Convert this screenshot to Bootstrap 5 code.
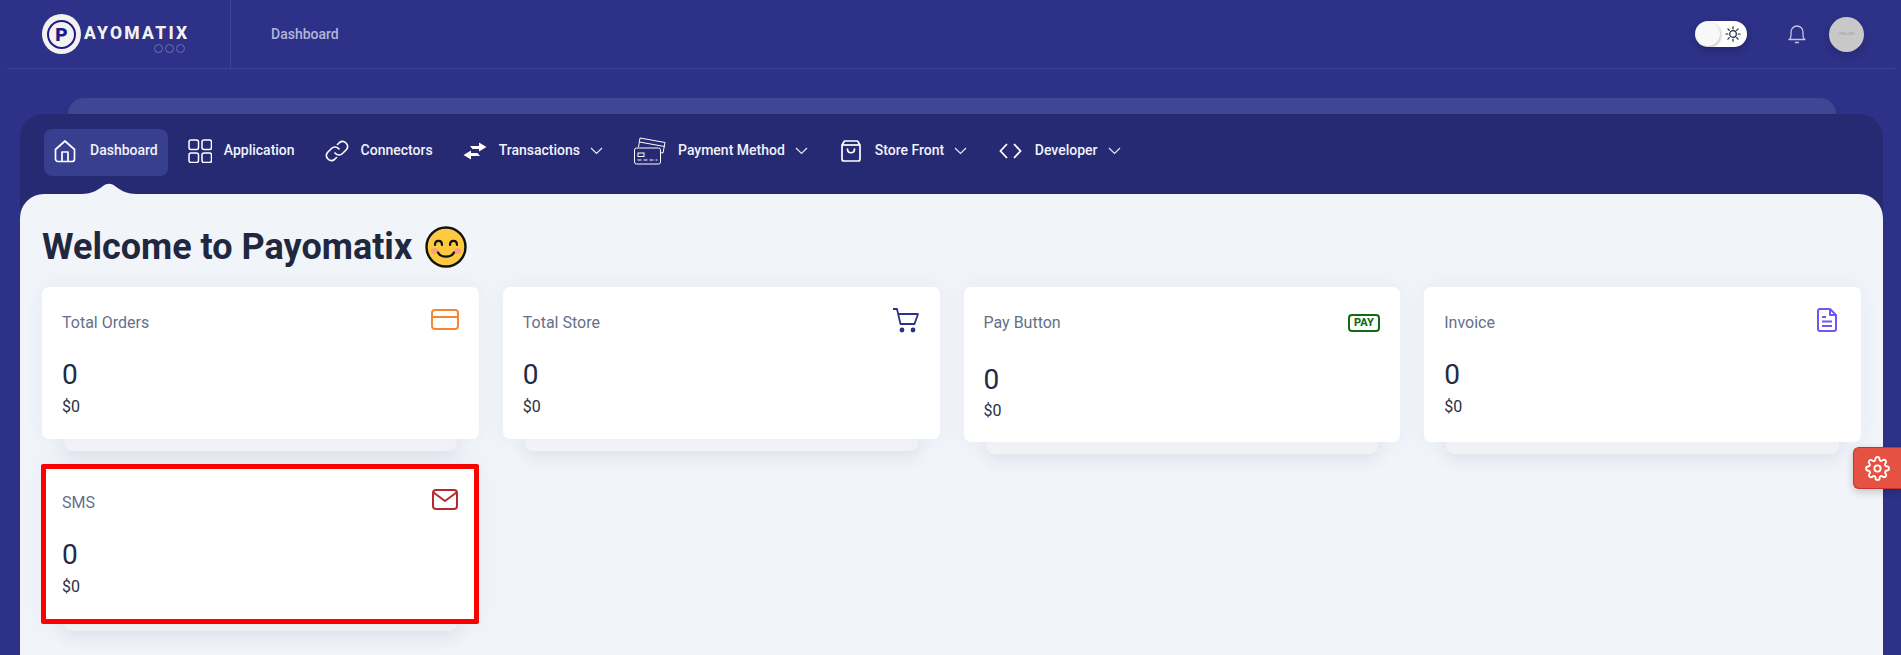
<!DOCTYPE html>
<html lang="en">

<head>
    <meta charset="UTF-8">
    <meta name="viewport" content="width=device-width, initial-scale=1.0">
    <title>Payomatix Dashboard</title>
    <link href="https://cdn.jsdelivr.net/npm/bootstrap@5.3.3/dist/css/bootstrap.min.css" rel="stylesheet">
    <style>
        body { background: #2d3188; font-family: Roboto, "Liberation Sans", sans-serif; height: 655px; overflow: hidden; }
        .top-bar { height: 69px; margin: 0 6px 0 7px; border-bottom: 1px solid #3f4595; }
        .logo-box { width: 224px; height: 68px; padding-left: 35px; border-right: 1px solid #3f4595; }
        .logo-disc { width: 39px; height: 40px; background: #f4f2ee; border-radius: 50%; flex: none; }
        .logo-ring { width: 29px; height: 29px; border: 2px solid #1f1a8c; border-radius: 50%; color: #1f1a8c; font-size: 19px; font-weight: 900; line-height: 25px; text-align: center; }
        .logo-word { color: #f4f2ee; font-weight: 800; font-size: 17.5px; letter-spacing: 2.3px; line-height: 1; margin-left: 3px; }
        .logo-dots { top: 30px; left: 112px; gap: 2px; }
        .logo-dots i { width: 9px; height: 9px; border: 1px solid #6c70ae; border-radius: 50%; display: block; }
        .logo-wrap { height: 41px; }
        .crumb { color: #b3b6da; font-size: 14px; font-weight: 500; margin-left: 40px; }
        .mode-switch { width: 52px; height: 26px; background: #fff; border-radius: 13px; box-shadow: 0 3px 8px rgba(0,0,0,.2); margin-right: 41px; padding: 0 6px 0 0; }
        .mode-knob { width: 24px; height: 24px; background: #f8f8f9; border-radius: 50%; box-shadow: 1px 1px 3px rgba(0,0,0,.25); margin-left: 1px; }
        .user-pic { width: 35px; height: 35px; background: #c8c8c8; border-radius: 50%; color: #999; font-size: 4px; margin-left: 23px; margin-right: 31px; box-shadow: 0 4px 10px rgba(0,0,0,.15); }
        .ghost-bar { height: 16px; margin: 29px 65px 0 68px; background: #3f4795; border-radius: 24px 24px 0 0; }
        .main-panel { margin: 0 18px 0 20px; background: #252a73; border-radius: 24px 24px 0 0; height: 541px; }
        .menu-row { height: 80px; padding: 15px 24px 0; gap: 10px; }
        .menu-link { color: #f1f2fa; font-size: 14px; font-weight: 500; text-decoration: none; height: 47px; padding: 0 10px 4px; gap: 12px; border-radius: 8px; }
        .menu-link:hover { color: #fff; }
        .menu-link.active-item { background: #383f8f; gap: 14px; }
        .menu-link svg { flex: none; }
        .menu-caret { margin-left: -2px; }
        .menu-link.pay-item { margin-left: 1px; }
        .menu-link.store-item { margin-left: 3px; gap: 14px; }
        .store-item .menu-caret { margin-left: -4px; }
        .menu-link.dev-item { margin-left: 1.5px; gap: 13px; }
        .dev-item .menu-caret { margin-left: -3px; }
        .hump { left: 61px; top: 68px; }
        .content-area { background: #f1f4f9; border-radius: 24px 24px 0 0; height: 461px; padding: 28px 22px 0; }
        .page-title { font-size: 36px; font-weight: 700; color: #20283f; line-height: 50px; margin: 0 0 15px 0; gap: 13px; }
        .stat-grid { display: grid; grid-template-columns: repeat(4, 1fr); column-gap: 24px; align-items: start; }
        .stat-wrap { padding-bottom: 12px; margin-bottom: 10px; }
        .stat-wrap.short-tail { padding-bottom: 7px; }
        .stat-wrap::after { content: ""; position: absolute; left: 22px; right: 22px; bottom: 0; height: 30px; background: #f4f5f8; border-radius: 0 0 8px 8px; box-shadow: 0 8px 16px rgba(50,60,110,.08); }
        .stat-box { background: #fff; border-radius: 7px; padding: 24px 20px 0; z-index: 1; height: 152px; box-shadow: 0 0 24px rgba(50,60,110,.05); }
        .stat-box.tall { height: 155px; }
        .stat-box.marked { border: 5px solid #f00; border-radius: 2px; padding: 22px 16px 0; height: 160px; margin-left: -1px; }
        .stat-head { height: 24px; }
        .stat-head svg { margin-bottom: 6px; flex: none; }
        .stat-name { color: #667089; font-size: 16px; line-height: 20px; }
        .stat-num { color: #222b45; font-size: 28px; line-height: 34px; margin-top: 23px; }
        .stat-money { color: #2a3042; font-size: 16px; line-height: 20px; margin-top: 5px; }
        .tall.shifted .stat-num { margin-top: 28px; }
        .tall.shifted .stat-money { margin-top: 4px; }
        .settings-tab { right: 0; top: 447px; width: 48px; height: 42px; background: #e55244; border: 1px solid #c5342c; border-right: 0; border-radius: 6px 0 0 6px; z-index: 5; box-shadow: 0 3px 8px rgba(0,0,0,.2); }
        .pay-badge { border: 2px solid #116a16; color: #116a16; font-size: 11px; font-weight: 800; line-height: 12px; border-radius: 4px; padding: 1px 4.5px; }
    </style>
</head>

<body>
    <!-- top bar -->
    <div class="top-bar d-flex align-items-center">
        <div class="logo-box d-flex align-items-center">
            <div class="logo-wrap d-flex align-items-center position-relative">
                <div class="logo-disc d-flex align-items-center justify-content-center">
                    <div class="logo-ring">P</div>
                </div>
                <span class="logo-word">AYOMATIX</span>
                <div class="logo-dots position-absolute d-flex"><i></i><i></i><i></i></div>
            </div>
        </div>
        <span class="crumb">Dashboard</span>
        <div class="ms-auto d-flex align-items-center">
            <div class="mode-switch d-flex align-items-center justify-content-between">
                <span class="mode-knob"></span>
                <svg width="16" height="16" viewBox="0 0 16 16" fill="none" stroke="#1f2539" stroke-width="1.2" stroke-linecap="round">
                    <circle cx="8" cy="8" r="3.3"/>
                    <path d="M8 .8v2M8 13.2v2M.8 8h2M13.2 8h2M2.9 2.9l1.400 1.400M11.700 11.700l1.400 1.400M2.900 13.100l1.400-1.400M11.700 4.300l1.400-1.400"/>
                </svg>
            </div>
            <svg width="18" height="20" viewBox="0 0 18 20" fill="none" stroke="#c1c4e3" stroke-width="1.3" stroke-linecap="round" stroke-linejoin="round">
                <path d="M1 15.500c1.300-.8 2-1.600 2-3.500V8a6 6 0 0 1 12 0v4c0 1.900.7 2.700 2 3.500z"/>
                <path d="M7.500 18.500h3"/>
            </svg>
            <div class="user-pic d-flex align-items-center justify-content-center">200x200</div>
        </div>
    </div>

    <div class="ghost-bar"></div>

    <div class="main-panel position-relative">
        <!-- menu -->
        <nav class="menu-row d-flex align-items-start">
            <a href="#" class="menu-link active-item d-flex align-items-center">
                <svg width="22" height="24" viewBox="0 0 22 24" fill="none" stroke="#fff" stroke-width="1.700" stroke-linejoin="round">
                    <path d="M1.500 10.500 11 2l9.500 8.500V20a2.500 2.500 0 0 1-2.500 2.500H4A2.500 2.500 0 0 1 1.500 20z"/>
                    <path d="M8 22.500V13h6v9.500"/>
                </svg>
                Dashboard
            </a>
            <a href="#" class="menu-link d-flex align-items-center">
                <svg width="24" height="24" viewBox="0 0 24 24" fill="none" stroke="#fff" stroke-width="1.500">
                    <rect x="1" y="1" width="9.500" height="9.500" rx="2"/><rect x="14" y="1" width="9.500" height="9.500" rx="2"/>
                    <rect x="1" y="14" width="9.500" height="9.500" rx="2"/><rect x="14" y="14" width="9.500" height="9.500" rx="2"/>
                </svg>
                Application
            </a>
            <a href="#" class="menu-link d-flex align-items-center">
                <svg width="24" height="24" viewBox="0 0 24 24" fill="none" stroke="#fff" stroke-width="1.600" stroke-linecap="round">
                    <path d="M10 14a5 5 0 0 0 7.500.5l4-4a5 5 0 0 0-7-7l-2 2"/>
                    <path d="M14 10a5 5 0 0 0-7.500-.5l-4 4a5 5 0 0 0 7 7l2-2"/>
                </svg>
                Connectors
            </a>
            <a href="#" class="menu-link d-flex align-items-center">
                <svg width="24" height="20" viewBox="0 0 24 20" fill="#fff">
                    <path d="M7 5h9V1.500L23.500 6 16 10.500V8H9.500z"/>
                    <path d="M17 15H8v3.500L.500 14 8 9.500V12h6.500z"/>
                </svg>
                Transactions
                <svg class="menu-caret" width="13" height="8" viewBox="0 0 13 8" fill="none" stroke="#e8e9f5" stroke-width="1.200"><path d="M1 1l5.500 5.500L12 1"/></svg>
            </a>
            <a href="#" class="menu-link pay-item d-flex align-items-center">
                <svg width="32" height="28" viewBox="0 0 32 28" fill="none" stroke="#fff" stroke-width="1">
                    <path d="M4.500 10 6 1l25 4.500-2 10.500-3-.5"/><path d="M5.500 5l25 4.500"/>
                    <rect x=".5" y="11" width="26" height="16" rx="2" fill="#252a73"/>
                    <rect x="4" y="16" width="6" height="3.500"/><path d="M3.500 23h20" stroke-dasharray="4 2"/>
                </svg>
                Payment Method
                <svg class="menu-caret" width="13" height="8" viewBox="0 0 13 8" fill="none" stroke="#e8e9f5" stroke-width="1.200"><path d="M1 1l5.500 5.500L12 1"/></svg>
            </a>
            <a href="#" class="menu-link store-item d-flex align-items-center">
                <svg width="20" height="22" viewBox="0 0 20 22" fill="none" stroke="#fff" stroke-width="1.700" stroke-linejoin="round">
                    <path d="M3.500 1h13l2.500 4v14a2 2 0 0 1-2 2H3a2 2 0 0 1-2-2V5z"/><path d="M1 5h18"/>
                    <path d="M6.500 9c0 5 7 5 7 0" stroke-linecap="round"/>
                </svg>
                Store Front
                <svg class="menu-caret" width="13" height="8" viewBox="0 0 13 8" fill="none" stroke="#e8e9f5" stroke-width="1.200"><path d="M1 1l5.500 5.500L12 1"/></svg>
            </a>
            <a href="#" class="menu-link dev-item d-flex align-items-center">
                <svg width="23" height="16" viewBox="0 0 23 16" fill="none" stroke="#fff" stroke-width="1.800"><path d="M8 1 1.500 8 8 15M15 1l6.500 7-6.500 7"/></svg>
                Developer
                <svg class="menu-caret" width="13" height="8" viewBox="0 0 13 8" fill="none" stroke="#e8e9f5" stroke-width="1.200"><path d="M1 1l5.500 5.500L12 1"/></svg>
            </a>
        </nav>
        <svg class="hump position-absolute" width="56" height="13" viewBox="0 0 56 13" fill="#f1f4f9"><path d="M0 12C12 12 18 7 22 4c4-3 8-3 12 0 4 3 10 8 22 8v1H0z"/></svg>

        <!-- page content -->
        <div class="content-area">
            <h1 class="page-title d-flex align-items-center">
                Welcome to Payomatix
                <svg width="42" height="42" viewBox="0 0 42 42">
                    <circle cx="21" cy="21" r="19.500" fill="#fdc93f" stroke="#111" stroke-width="2.400"/>
                    <ellipse cx="9.500" cy="25" rx="3.500" ry="3" fill="#f5a17f"/><ellipse cx="32.500" cy="25" rx="3.500" ry="3" fill="#f5a17f"/>
                    <g fill="none" stroke="#111" stroke-width="2.200" stroke-linecap="round">
                        <path d="M10 19c0-5.500 7-5.500 7 0M25 19c0-5.500 7-5.500 7 0"/><path d="M13 26.500c3 5.500 13 5.500 16 0"/>
                    </g>
                </svg>
            </h1>
            <div class="stat-grid">
                <div class="stat-wrap position-relative">
                    <div class="stat-box position-relative">
                        <div class="stat-head d-flex justify-content-between align-items-center">
                            <div class="stat-name">Total Orders</div>
                            <svg width="28" height="22" viewBox="0 0 28 22" fill="none" stroke="#f58634" stroke-width="2"><rect x="1" y="1" width="26" height="19" rx="3"/><path d="M1 8h26"/></svg>
                        </div>
                        <div class="stat-num">0</div>
                        <div class="stat-money">$0</div>
                    </div>
                </div>
                <div class="stat-wrap position-relative">
                    <div class="stat-box position-relative">
                        <div class="stat-head d-flex justify-content-between align-items-center">
                            <div class="stat-name">Total Store</div>
                            <svg width="28" height="26" viewBox="0 0 28 26" fill="none" stroke="#2d3189" stroke-width="1.800" stroke-linejoin="round"><path d="M1 2h4l3.500 15h14L26 7H6"/><circle cx="10" cy="23" r="1.500" fill="#2d3189"/><circle cx="21" cy="23" r="1.500" fill="#2d3189"/></svg>
                        </div>
                        <div class="stat-num">0</div>
                        <div class="stat-money">$0</div>
                    </div>
                </div>
                <div class="stat-wrap position-relative">
                    <div class="stat-box tall shifted position-relative">
                        <div class="stat-head d-flex justify-content-between align-items-center">
                            <div class="stat-name">Pay Button</div>
                            <span class="pay-badge">PAY</span>
                        </div>
                        <div class="stat-num">0</div>
                        <div class="stat-money">$0</div>
                    </div>
                </div>
                <div class="stat-wrap position-relative">
                    <div class="stat-box tall position-relative">
                        <div class="stat-head d-flex justify-content-between align-items-center">
                            <div class="stat-name">Invoice</div>
                            <svg class="me-1" width="20" height="24" viewBox="0 0 20 24" fill="none" stroke="#6f57f5" stroke-width="2" stroke-linejoin="round"><path d="M3 1h10l6 6v14a2 2 0 0 1-2 2H3a2 2 0 0 1-2-2V3a2 2 0 0 1 2-2z"/><path d="M13 1v6h6"/><path d="M5 9h4M5 13.500h10M5 18h10"/></svg>
                        </div>
                        <div class="stat-num">0</div>
                        <div class="stat-money">$0</div>
                    </div>
                </div>
                <div class="stat-wrap short-tail position-relative">
                    <div class="stat-box marked position-relative">
                        <div class="stat-head d-flex justify-content-between align-items-center">
                            <div class="stat-name">SMS</div>
                            <svg width="26" height="22" viewBox="0 0 26 22" fill="none" stroke="#b7282e" stroke-width="2" stroke-linejoin="round"><rect x="1" y="1" width="24" height="19" rx="3"/><path d="M1.500 3.500 13 12 24.500 3.500"/></svg>
                        </div>
                        <div class="stat-num">0</div>
                        <div class="stat-money">$0</div>
                    </div>
                </div>
            </div>
        </div>
    </div>

    <!-- settings tab -->
    <div class="settings-tab position-fixed d-flex align-items-center justify-content-center">
        <svg width="25" height="25" viewBox="0 0 24 24" fill="none" stroke="#fff" stroke-width="1.800" stroke-linejoin="round">
            <circle cx="12" cy="12" r="3"/>
            <path d="M19.400 15a1.650 1.650 0 0 0 .33 1.820l.06.06a2 2 0 1 1-2.830 2.830l-.06-.06a1.650 1.650 0 0 0-2.820 1.170V21a2 2 0 1 1-4 0v-.09a1.650 1.650 0 0 0-2.820-1.160l-.06.06a2 2 0 1 1-2.830-2.830l.06-.06a1.650 1.650 0 0 0-1.170-2.820H3a2 2 0 1 1 0-4h.09a1.650 1.650 0 0 0 1.160-2.820l-.06-.06a2 2 0 1 1 2.830-2.830l.06.06a1.650 1.650 0 0 0 2.820-1.170V3a2 2 0 1 1 4 0v.09a1.650 1.650 0 0 0 2.820 1.160l.06-.06a2 2 0 1 1 2.830 2.830l-.06.06a1.650 1.650 0 0 0 1.170 2.820H21a2 2 0 1 1 0 4h-.09a1.650 1.650 0 0 0-1.510 1z"/>
        </svg>
    </div>

    <script src="https://cdn.jsdelivr.net/npm/bootstrap@5.3.3/dist/js/bootstrap.bundle.min.js"></script>
</body>

</html>
